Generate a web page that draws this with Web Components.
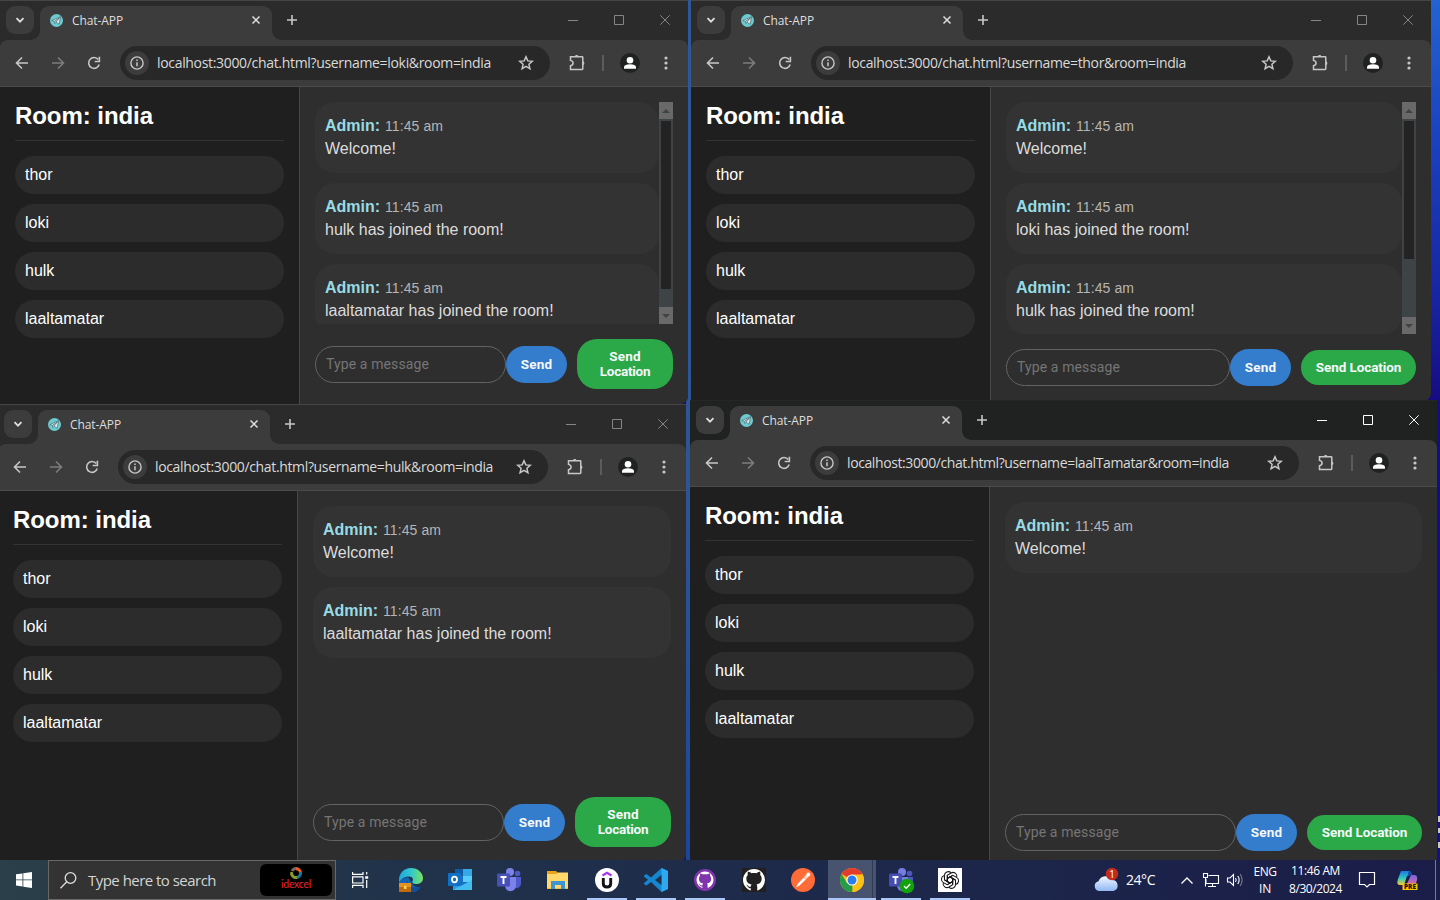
<!DOCTYPE html>
<html lang="en"><head><meta charset="utf-8"><title>Chat-APP</title>
<style>html,body{margin:0;width:1440px;height:900px;overflow:hidden;background:#1d4fae}</style></head>
<body><desk-top></desk-top>
<script>
const UI='"Open Sans","Noto Sans",sans-serif', ARIAL='"Liberation Sans",Arial,sans-serif';
const make=(name,render,after)=>customElements.define(name,class extends HTMLElement{
  connectedCallback(){
    if(this.shadowRoot)return;
    const s=this.attachShadow({mode:'open'});s.innerHTML=render(this);
    if(after)after(this,s);
  }
});

// Single-line label with letter spacing tuned so that it fills a given width.
make('fit-text',()=>`<style>:host{display:inline-block;white-space:nowrap;vertical-align:baseline}span{display:inline-block}</style><span></span>`,
(el,s)=>{const sp=s.querySelector('span'),w=+el.getAttribute('w');sp.textContent=el.getAttribute('text');
  const nat=sp.getBoundingClientRect().width;if(w){sp.style.letterSpacing=((w-nat)/sp.textContent.length)+'px';el.style.width=w+'px'}});

make('chrome-icon',el=>{
  const I={
  down:['12','<path d="M2.5 4.2 6 7.7l3.5-3.5" stroke-width="1.8"/>'],
  close:['10','<path d="M1.500 1.500l7 7M8.500 1.500l-7 7" stroke-width="1.500"/>'],
  plus:['12','<path d="M6 1v10M1 6h10" stroke-width="1.600"/>'],
  back:['14','<path d="M13 7H2M7 1.500 1.500 7 7 12.500" stroke-width="1.600"/>'],
  fwd:['14','<path d="M1 7h11M7 1.500 12.500 7 7 12.500" stroke-width="1.600"/>'],
  reload:['14','<path d="M12.200 8.500A5.400 5.400 0 1 1 11.300 3.600" stroke-width="1.600"/><path d="M12.400.8v4.700H7.700" stroke-width="1.600"/>'],
  info:['14','<circle cx="7" cy="7" r="6.100" stroke-width="1.400"/><path d="M7 6.300v4M7 3.600v1.500" stroke-width="1.500"/>'],
  star:['16','<path d="M8 1.800 9.800 5.900 14.300 6.300 10.900 9.300 11.900 13.700 8 11.300 4.100 13.700 5.100 9.300 1.700 6.300 6.200 5.900Z" stroke-width="1.500"/>'],
  puzzle:['18','<path d="M2.500 2.800H14.200Q14.800 2.800 14.800 3.500V14.800Q14.800 15.500 14.200 15.500H2.500V11.800Q5.100 11.100 5.100 9.100T2.500 6.400Z" stroke-width="1.500"/><path d="M6.800 2.500a1.900 1.900 0 0 1 3.700 0ZM15 7.500a1.800 1.800 0 0 1 0 3.500Z" fill="currentColor" stroke="none"/>'],
  user:['20','<circle cx="10" cy="10" r="10" fill="#202121" stroke="none"/><circle cx="10" cy="7.200" r="3.300" fill="#fff" stroke="none"/><path d="M4 15.800V14Q4.500 11.200 10 11.200T16 14v1.800Z" fill="#fff" stroke="none"/>'],
  dots:['16','<g fill="currentColor" stroke="none"><circle cx="8" cy="3" r="1.600"/><circle cx="8" cy="8" r="1.600"/><circle cx="8" cy="13" r="1.600"/></g>'],
  min:['10','<path d="M0 5.500H10"/>'],
  max:['10','<path d="M.5.5h9v9h-9z"/>'],
  x:['10','<path d="M.3.3l9.400 9.400M9.700.3.3 9.700"/>'],
  fav:['13','<circle cx="6.500" cy="6.500" r="6.500" fill="#6ccbd0" stroke="none"/><path d="M1.800 6.600 10.600 2.600 9.100 10.300 6.200 8.200 4.900 9.600 4.500 7.400Z" fill="#d6eeee" stroke="#47646a" stroke-width=".7"/><path d="M4.500 7.400 9.500 3.800 5.800 8" stroke="#47646a" stroke-width=".8"/>']
  }[el.getAttribute('name')];
  return `<style>:host{display:block;flex:none;width:${I[0]}px;height:${I[0]}px}svg{display:block}</style><svg width="${I[0]}" height="${I[0]}" viewBox="0 0 ${I[0]} ${I[0]}" fill="none" stroke="currentColor">${I[1]}</svg>`});

make('browser-window',el=>{
  const on=el.hasAttribute('active'),url=el.getAttribute('path'),uw=el.getAttribute('urlw');
  return `<style>
  :host{display:flex;flex-direction:column;box-sizing:border-box;background:#212222;font:12px ${UI};color:#dedede;overflow:hidden;border-radius:0 0 8px 0}
  .bar{height:40px;flex:none;box-sizing:border-box;border-top:1px solid ${on?'#252626':'#454545'};background:${on?'#202121':'#2b2b2b'};display:flex}
  .dd{width:28px;height:28px;border-radius:9px;background:#3c3c3c;margin:5px 0 0 6px;display:grid;place-items:center;flex:none}
  .tab{position:relative;margin:5px 0 0 6px;width:232px;height:34px;flex:none;box-sizing:border-box;background:#3c3c3c;border-radius:9px 9px 0 0;display:flex;align-items:center;padding:0 11px 6px 9.500px}
  .tab:before,.tab:after{content:"";position:absolute;bottom:0;width:9px;height:9px;background:radial-gradient(circle at 0 0,transparent 8.500px,#3c3c3c 9px);left:-9px}
  .tab:after{left:auto;right:-9px;background:radial-gradient(circle at 100% 0,transparent 8.500px,#3c3c3c 9px)}
  .name{margin-left:9.500px;flex:1;line-height:16px;padding-top:1px}
  .plus{margin:13px 0 0 14px;color:#c8c8c8}
  .ctl{margin-left:auto;display:flex;gap:36px;padding:14px 18px 0 0;color:${on?'#fff':'#858585'}}
  .tools{height:47px;flex:none;box-sizing:border-box;border-bottom:1px solid #4b4b4b;background:#3c3c3c;display:flex;align-items:center;padding:0 14px 1px 15px;color:#c7c7c7;border-radius:8px 8px 0 0}
  .toolbg{background:${on?'#202121':'#2b2b2b'};flex:none}
  .fwd{margin-left:22px;color:#7c7c7c}.re{margin:0 19px 0 22px}
  .omni{flex:1;height:34px;border-radius:17px;background:#282828;display:flex;align-items:center;padding:0 16px 0 5px}
  .in{width:24px;height:24px;border-radius:50%;background:#3c3c3c;display:grid;place-items:center;margin-right:8px;flex:none}
  .url{font-size:14px;line-height:20px;color:#dadada;flex:1}
  .pz{margin-left:18px}.sep{width:2px;height:16px;background:#5c5c5c;margin:0 16px}.dt{margin-left:18px}
  .content{flex:1;min-height:0;display:flex}
  ::slotted(*){flex:1;min-width:0}
  </style>
  <div class="bar"><div class="dd"><chrome-icon name="down"></chrome-icon></div>
   <div class="tab"><chrome-icon name="fav"></chrome-icon><div class="name"><fit-text text="Chat-APP" w="51"></fit-text></div><chrome-icon name="close"></chrome-icon></div>
   <chrome-icon class="plus" name="plus"></chrome-icon>
   <div class="ctl"><chrome-icon name="min"></chrome-icon><chrome-icon name="max"></chrome-icon><chrome-icon name="x"></chrome-icon></div></div>
  <div class="toolbg"><div class="tools"><chrome-icon name="back"></chrome-icon><chrome-icon class="fwd" name="fwd"></chrome-icon><chrome-icon class="re" name="reload"></chrome-icon>
   <div class="omni"><div class="in"><chrome-icon name="info"></chrome-icon></div><div class="url"><fit-text text="localhost:3000${url}" w="${uw}"></fit-text></div><chrome-icon name="star"></chrome-icon></div>
   <chrome-icon class="pz" name="puzzle"></chrome-icon><div class="sep"></div><chrome-icon name="user"></chrome-icon><chrome-icon class="dt" name="dots"></chrome-icon></div></div>
  <div class="content"><slot></slot></div>`});

make('user-list',()=>`<style>:host{display:block;width:299px;box-sizing:border-box;padding:15px;background:#1f1f1f;flex:none;font:16px/18px ${ARIAL};color:#fff}
 h2{margin:0 0 15px;font-size:24px;line-height:28px;padding-bottom:10px;border-bottom:1px solid #333;height:28px}
 .u{height:38px;box-sizing:border-box;padding:10px;line-height:18px;border-radius:19px;background:#2c2c2c;margin-bottom:10px}</style>
 <h2><fit-text text="Room: india" w="138"></fit-text></h2>${['thor','loki','hulk','laaltamatar'].map(n=>`<div class="u">${n}</div>`).join('')}`);

make('chat-message',el=>`<style>:host{display:block;height:71px;flex:none;box-sizing:border-box;padding:12px 10px;background:#333;border-radius:20px;font:16px/23px ${ARIAL};color:#dcdcdc}
 .h{height:23px}b{color:#97dce5;margin-right:5px}.t{font-size:14px;color:#b5b5b5}</style>
 <div class="h"><b><fit-text text="Admin:" w="55"></fit-text></b><span class="t"><fit-text text="11:45 am" w="58"></fit-text></span></div><div>${el.getAttribute('text')}</div>`);

make('scroll-strip',el=>`<style>:host{display:flex;flex-direction:column;width:14px;flex:none;background:#3e4446}
 .b{height:17px;background:#696969;display:grid;place-items:center;flex:none}.track{flex:1}.th{margin:2px;height:${el.getAttribute('thumb')}px;background:#232323}svg{display:block}</style>
 <div class="b"><svg width="8" height="4"><path d="M0 4h8L4 0z" fill="#3e4446"/></svg></div><div class="track"><div class="th"></div></div><div class="b"><svg width="8" height="4"><path d="M0 0h8L4 4z" fill="#3e4446"/></svg></div>`);

make('chat-room',el=>{
 const msgs=el.getAttribute('messages').split('|'),th=el.getAttribute('thumb'),nar=el.hasAttribute('narrow');
 return `<style>:host{display:flex;font-family:${ARIAL}}
 .main{flex:1;min-width:0;display:flex;flex-direction:column;background:#2e2e2e;border-left:1px solid #474747;padding:15px;box-sizing:border-box}
 .log{flex:1;min-height:0;display:flex;overflow:hidden;margin-bottom:15px}.list{flex:1;display:flex;flex-direction:column;gap:10px;overflow:hidden}
 .form{display:flex;align-items:center;flex:none;font-family:Roboto,${ARIAL}}
 .inp{flex:1;height:37px;box-sizing:border-box;border:1px solid #636363;border-radius:19px;padding:0 10px;line-height:35px;font-size:14px;color:#757575}
 .btn{background:#347ccc;color:#f4f8fb;font-weight:bold;font-size:13.500px;line-height:15px;border-radius:20px;width:61px;height:37px;display:grid;place-items:center;text-align:center}
 .loc{background:#2ba847;margin-left:10px;width:${nar?96:115}px;height:${nar?50:35}px;align-content:center}</style>
 <user-list></user-list><div class="main"><div class="log"><div class="list">${msgs.map(m=>`<chat-message text="${m}"></chat-message>`).join('')}</div>${th?`<scroll-strip thumb="${th}"></scroll-strip>`:''}</div>
 <div class="form"><div class="inp"><fit-text text="Type a message" w="103"></fit-text></div><div class="btn"><fit-text text="Send" w="31.500"></fit-text></div>
 <div class="btn loc">${nar?'<fit-text text="Send" w="31.500"></fit-text><fit-text text="Location" w="50.500"></fit-text>':'<fit-text text="Send Location" w="85.500"></fit-text>'}</div></div></div>`});

const APPS={
edge:'<defs><linearGradient id="a" x2="1"><stop stop-color="#22a6df"/><stop offset=".5" stop-color="#30c7cf"/><stop offset="1" stop-color="#7be35a"/></linearGradient></defs><path d="M0 12A12 12 0 0 0 12 24C17 24 20 22 21.500 19Q17 20 14 17L9 9Z" fill="#1565b4"/><path d="M0 12C0 5 5 0 12 0s12 5 12 10c0 4-3 6-7 6-3 0-4.500-1.500-3.500-3 1-1.400.5-4.500-3.500-4.500C6 8.500 1 11 0 15Z" fill="url(#a)"/><path d="M9 12c-1 6 5 9 12.500 7-2 3.500-5 5-9.500 5C7 24 7 15 9 12Z" fill="#124f96"/><path d="M0 15h12v9H0z" fill="#c26b0c"/><path d="M0 15h12v4H0z" fill="#e59222"/><path d="M5 18h2.500v3H5z" fill="#ffd45a"/>',
outlook:'<path d="M7 1h17v20H7z" fill="#1b6fc0"/><path d="M7 1h8v7H7z" fill="#0f5ba6"/><path d="M15 1h9v7h-9z" fill="#35a9e8"/><path d="M15 8h9v6h-9z" fill="#57cdf7"/><path d="M5 13l10 6 9-7v10H5z" fill="#2e9be2"/><path d="M5 22l19-10v10z" fill="#43bdf0"/><rect y="5" width="13" height="13" rx="1" fill="#1070c5"/><ellipse cx="6.500" cy="11.500" rx="2.500" ry="2.800" fill="none" stroke="#fff" stroke-width="1.800"/>',
teams:'<circle cx="20.500" cy="5.500" r="2.800" fill="#5059c9"/><path d="M17 9h7v7q-1 5-7 4z" fill="#5059c9"/><circle cx="13" cy="4" r="4" fill="#7b83eb"/><path d="M8 9h11v9q-1 6-7 5-4-1-4-6z" fill="#7b83eb"/><rect y="5.500" width="13" height="13" rx="1" fill="#4650b8"/><path d="M3.500 9h6M6.500 9v7" stroke="#fff" stroke-width="1.900"/>',
folder:'<path d="M1 3h9l2 2h10v16H1z" fill="#e5a516"/><path d="M1 6l9 0 2-1.500h10V20.500H1z" fill="#ffd76b"/><path d="M5 13h14v8h-4v-4H9v4H5z" fill="#3f94d2"/>',
udemy:'<circle cx="12" cy="12" r="12" fill="#fff"/><path d="M7.500 7.500 12 4.800l4.500 2.700" fill="none" stroke="#a435f0" stroke-width="2.200"/><path d="M8.300 10v5.500q0 3.500 3.700 3.500t3.700-3.500V10" fill="none" stroke="#141414" stroke-width="2.900"/>',
vscode:'<path d="M17.500 0 24 3v18l-6.500 3L7 14l-4.500 3.500L0 16V15l4-3.200L0 8.500 0 7.500 2.500 6 7 9.500Z" fill="#1686cf"/><path d="M17.500 0 24 3v18l-6.500 3Z" fill="#2da9f0"/><path d="M17.500 7v10L11 12Z" fill="#20304a"/>',
gh:'<path d="M12 3.200c-1.300 0-2.100.2-2.700.4C7.500 2.300 5.700 2 5.200 2.100c-.5 1.500-.2 2.700 0 3.200C4 6.600 3.500 8 3.500 9.700c0 4 2.500 5.800 5.800 6.300-.7.700-.9 1.500-.9 2.500-2 .6-2.700-.4-3.500-1.500-.6-.8-1.400-.8-1.400-.3 1.500.7 1.300 3.500 4.900 3.700V24h7.200v-5.500c0-1-.2-1.900-.9-2.500 3.300-.5 5.800-2.300 5.800-6.300 0-1.700-.5-3.100-1.700-4.400.2-.5.500-1.700 0-3.200-.5-.1-2.300.2-4.100 1.500-.6-.2-1.400-.4-2.700-.4Z"/>',
postman:'<circle cx="12" cy="12" r="12" fill="#ff6c37"/><path d="M5 19.500 7 15.500 12.800 9.500 14.800 11.500 8.500 17.500Z" fill="#fff"/><path d="M13 9l2.500-2.500 2.200 2-2.700 2.700z" fill="#ffe0d4"/><circle cx="17.300" cy="6.500" r="1.900" fill="#fff"/>',
chrome:'<circle cx="12" cy="12" r="12" fill="#fbc116"/><path d="M12 12 1.600 6A12 12 0 0 1 22.400 6Z" fill="#e33b2e"/><path d="M12 12 12.500 24A12 12 0 0 1 1.600 6L7 15Z" fill="#269b4a"/><path d="M12 6.500H22.700A12 12 0 0 1 12 24l5-9Z" fill="#fbc116"/><circle cx="12" cy="12" r="5.600" fill="#fff"/><circle cx="12" cy="12" r="4.500" fill="#2a7cf0"/>',
gpt:'<path d="M0 0h24v24H0z" fill="#fff"/><g fill="none" stroke="#161616" stroke-width="1.050">'+[0,60,120,180,240,300].map(a=>`<path transform="rotate(${a} 12 12)" d="M9.300 13.600V7.200L13 5a3.900 3.900 0 0 1 5.800 4.200M9.300 10.400 12 8.900l5.300 3.100"/>`).join('')+'</g>'};
APPS.ghp='<circle cx="12" cy="12" r="11" fill="#8135ad"/><circle cx="12" cy="12" r="8.500" fill="#fff"/><g fill="#8135ad" transform="translate(3.400 4) scale(.72)">'+APPS.gh+'</g>';
APPS.ghb='<path d="M0 0h24v24H0z" fill="#211f20"/><circle cx="12" cy="12" r="11" fill="#fff"/><g fill="#211f20" transform="translate(1.200 2) scale(.9)">'+APPS.gh+'</g>';
APPS.teams2='<g opacity=".95">'+APPS.teams+'</g><circle cx="18" cy="18" r="7.300" fill="#13a10e"/><path d="M15 18l2.200 2.300 4-4.300" stroke="#fff" stroke-width="1.300" fill="none"/>';

make('task-app',el=>`<style>:host{display:flex;width:49px;height:40px;flex:none;justify-content:center;align-items:center;box-sizing:border-box}
 .c{height:40px;width:${el.hasAttribute('sel')?48:40}px;display:grid;place-items:center;box-sizing:border-box;border-bottom:2px solid ${el.hasAttribute('open')?'#a9c7f7':'transparent'};padding-top:2px}
 ${el.hasAttribute('sel')?':host{justify-content:flex-end}.c{background:linear-gradient(90deg,#47536f 44px,#303a57 44px 45px,#47536f 45px)}':''}svg{display:block;overflow:visible}</style>
 <div class="c"><svg width="24" height="24" viewBox="0 0 24 24">${APPS[el.getAttribute('name')]}</svg></div>`);

make('task-bar',()=>`<style>:host{display:flex;height:40px;width:1440px;background:linear-gradient(90deg,#2a3f49,#21344a 25%,#1e2b4a 50%,#1c244a 75%,#1a1d48);font:15px ${UI};color:#fff;overflow:hidden}
 .win{width:48px;display:grid;place-items:center}svg{display:block;overflow:visible}
 .search{width:288px;height:40px;box-sizing:border-box;border:1px solid #686868;background:#333;display:flex;align-items:center;padding:0 3px 0 11px;color:#d5d5d5}
 .q{margin-left:11px;flex:none}.logo{margin-left:auto;width:72px;height:32px;border-radius:6px;background:#000;display:flex;flex-direction:column;align-items:center;color:#e32633;font:10.500px/10px Lato,sans-serif}
 .logo svg{margin:3px 0 0}.tv{width:48px;display:grid;place-items:center;margin-right:2px}
 .tray{margin-left:auto;display:flex;align-items:center}.st{display:flex;flex-direction:column;align-items:center;font-size:12px;line-height:17px}
 .line{width:1px;height:40px;background:#777c96;margin-right:4px}</style>
 <div class="win"><svg width="16" height="16"><path d="M0 2.300 6.500 1.400V7.500H0zM7.300 1.300 16 0V7.500H7.300zM0 8.300H6.500V14.500L0 13.600zM7.300 8.300H16V16L7.300 14.700z" fill="#fff"/></svg></div>
 <div class="search"><svg width="17" height="17" fill="none" stroke="#ddd" stroke-width="1.300"><circle cx="10.500" cy="6" r="5.300"/><path d="M6.800 9.800.5 16.200"/></svg><fit-text class="q" text="Type here to search" w="128"></fit-text>
 <div class="logo"><svg width="12" height="12" fill="none" stroke-width="3"><path d="M2 4A4.500 4.500 0 0 1 8 2" stroke="#6f6a62"/><path d="M6 1.700A4.500 4.500 0 0 1 10.500 6" stroke="#ef5d27"/><path d="M10.500 5A4.500 4.500 0 0 1 6 10.500" stroke="#17769b"/><path d="M7 10.500A4.500 4.500 0 0 1 1.700 5" stroke="#8b9c2d"/></svg><fit-text text="idexcel" w="30"></fit-text></div></div>
 <div class="tv"><svg width="17" height="16" fill="none" stroke="#fff" stroke-width="1.200"><path d="M.6 0V2.400H11V0M.6 16V13.400H11V16M.6 4.800H11V11H.6zM14.700 0V2.500M14.700 8V16"/><path d="M13.200 4.200h3v2.600h-3z" fill="#fff" stroke="none"/></svg></div>
 <task-app name="edge"></task-app><task-app name="outlook"></task-app><task-app name="teams"></task-app><task-app name="folder"></task-app><task-app name="udemy" open></task-app><task-app name="vscode" open></task-app><task-app name="ghp" open></task-app><task-app name="ghb"></task-app><task-app name="postman"></task-app><task-app name="chrome" open sel></task-app><task-app name="teams2" open></task-app><task-app name="gpt" open></task-app>
 <div class="tray"><svg width="25" height="24"><defs><linearGradient id="c" y2="1" x2="0"><stop stop-color="#f2f7ff"/><stop offset="1" stop-color="#8fb8f4"/></linearGradient></defs><path d="M5 23a5 5 0 0 1-.5-9.800A7.500 7.500 0 0 1 18 12a5.600 5.600 0 0 1 1.500 11Z" fill="url(#c)"/><circle cx="18" cy="6" r="6.200" fill="#c42b1c"/><text x="18" y="10" font-size="10.500" text-anchor="middle" fill="#fff">1</text></svg>
 <fit-text text="24°C" w="29" style="font-size:14px;margin:-1px 26px 0 7px"></fit-text>
 <svg width="12" height="7" fill="none" stroke="#fff" stroke-width="1.300"><path d="M.5 6.500 6 1l5.500 5.500"/></svg>
 <svg width="16" height="14" style="margin-left:10px" fill="none" stroke="#fff" stroke-width="1.100"><path d="M5.500 2.500H15.500V10.500H3V6M9.500 10.500V13.500M5 13.500H13M.5.500H4.500V4.500H.5zM2.500 4.500V13.500"/></svg>
 <svg width="16" height="14" style="margin-left:8px" fill="none" stroke="#fff" stroke-width="1.100"><path d="M.5 5H3L6.500 1.500V12.500L3 9H.5zM8.500 5Q10 7 8.500 9M10.800 3Q13.500 7 10.800 11"/><path d="M13.200 1Q17 7 13.200 13" stroke="#777c96"/></svg>
 <div class="st" style="margin-left:10px;width:24px"><fit-text text="ENG" w="23"></fit-text><fit-text text="IN" w="12"></fit-text></div>
 <div class="st" style="margin-left:12px;width:53px;line-height:18px;margin-top:-1px"><fit-text text="11:46 AM" w="49"></fit-text><fit-text text="8/30/2024" w="53"></fit-text></div>
 <svg width="16" height="16" style="margin:0 22px 0 17px" fill="none" stroke="#fff" stroke-width="1.200"><path d="M.5.500H15.500V12.500H10.500L8 15 5.500 12.500H.5z"/></svg>
 <svg width="21" height="21" style="margin-right:17px"><defs><linearGradient id="l" x2="0" y2="1"><stop stop-color="#1a78e5"/><stop offset=".5" stop-color="#2cc6c4"/><stop offset="1" stop-color="#f4cf32"/></linearGradient><linearGradient id="r" x2="0" y2="1"><stop stop-color="#7167e8"/><stop offset="1" stop-color="#ee668f"/></linearGradient></defs><path d="M4 1H12Q14 1 14.500 4L10 6 7 15H3Q-1 15 1 9Z" fill="url(#l)"/><path d="M14 5H17Q21 5 20 10L18 16H9Z" fill="url(#r)"/><path d="M11.500 1.500Q14 1 15 5L11 6Z" fill="#1746a5"/><path d="M5.500 13.500h15V20h-15z" fill="#ffc400"/><text x="13" y="19" font-size="6.500" font-weight="800" text-anchor="middle" fill="#111">PRE</text></svg>
 <div class="line"></div></div>`);

make('desk-top',()=>`<style>:host{display:block;position:relative;width:1440px;height:900px;overflow:hidden;background:linear-gradient(180deg,#2363d3 0,#1a3fbd 150px,#1826a4 290px,#160c83 400px,#14108a 860px)}
 browser-window{position:absolute}
 .gap{position:absolute;width:6px;left:686px;top:0;height:860px;background:linear-gradient(180deg,#2f5699,#2c5597 60%,#1b469c)}
 .label{position:absolute;left:1438px;top:816px;width:2px;height:32px;background:linear-gradient(#c9c7c4 0 6px,transparent 6px 12px,#c9c7c4 12px 17px,transparent 17px 26px,#c9c7c4 26px)}
 task-bar{position:absolute;left:0;top:860px}</style><div class="gap"></div><div class="label"></div>
 <browser-window style="left:0;top:0;width:688px;height:404px" path="/chat.html?username=loki&amp;room=india" urlw="334"><chat-room thumb="168" narrow messages="Welcome!|hulk has joined the room!|laaltamatar has joined the room!"></chat-room></browser-window>
 <browser-window style="left:691px;top:0;width:740px;height:401px" path="/chat.html?username=thor&amp;room=india" urlw="338"><chat-room thumb="138" messages="Welcome!|loki has joined the room!|hulk has joined the room!"></chat-room></browser-window>
 <browser-window style="left:-2px;top:404px;width:688px;height:458px" path="/chat.html?username=hulk&amp;room=india" urlw="338"><chat-room narrow messages="Welcome!|laaltamatar has joined the room!"></chat-room></browser-window>
 <browser-window active style="left:690px;top:400px;width:747px;height:466px" path="/chat.html?username=laalTamatar&amp;room=india" urlw="382"><chat-room messages="Welcome!"></chat-room></browser-window>
 <task-bar></task-bar>`);
</script></body></html>
